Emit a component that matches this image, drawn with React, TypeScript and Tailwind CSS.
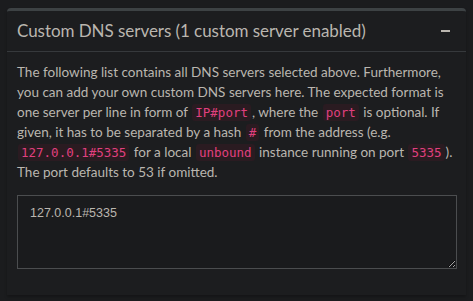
import React from "react";

const Code = ({ children }: { children: React.ReactNode }) => (
  <code className="font-['DejaVu_Sans_Mono',monospace] text-[12.5px] leading-[16px] text-[#e0407f] bg-[#2a1b21] rounded-[3px] px-[3px] py-[1px] mx-[1px]">
    {children}
  </code>
);

export default function App() {
  return (
    <div className="w-[473px] h-[301px] bg-[#1b1c1e] pt-[8px] px-[7px] font-['Source_Sans_Pro','Lato',sans-serif] text-[#bab6af]">
      <div className="border-t-[3px] border-[#3d4244] rounded-t-[4px] bg-[#1c1d1f] shadow-[0_2px_3px_rgba(0,0,0,0.25)]">
        <div className="flex items-center justify-between h-[41px] pl-[10px] pr-[16px] border-b border-[#36393c]">
          <span className="text-[17px] tracking-[-0.05px]">Custom DNS servers (1 custom server enabled)</span>
          <span className="block w-[9px] h-[1.5px] bg-[#bab6af]" />
        </div>
        <div className="px-[10px] pt-[10px] pb-[26px]">
          <p className="text-[13.5px] leading-[20px]">
            The following list contains all DNS servers selected above. Furthermore, you can add your own custom DNS servers here. The expected format is one server per line in form of <Code>IP#port</Code>, where the <Code>port</Code> is optional. If given, it has to be separated by a hash <Code>#</Code> from the address (e.g. <Code>127.0.0.1#5335</Code> for a local <Code>unbound</Code> instance running on port <Code>5335</Code>). The port defaults to 53 if omitted.
          </p>
          <textarea
            className="mt-[13px] block w-[440px] h-[74px] bg-[#1a1b1d] border border-[#4b4d4f] px-[12px] py-[8px] text-[12.5px] text-[#bab6af] font-['Liberation_Sans',sans-serif] outline-none"
            defaultValue="127.0.0.1#5335"
          />
        </div>
      </div>
    </div>
  );
}
